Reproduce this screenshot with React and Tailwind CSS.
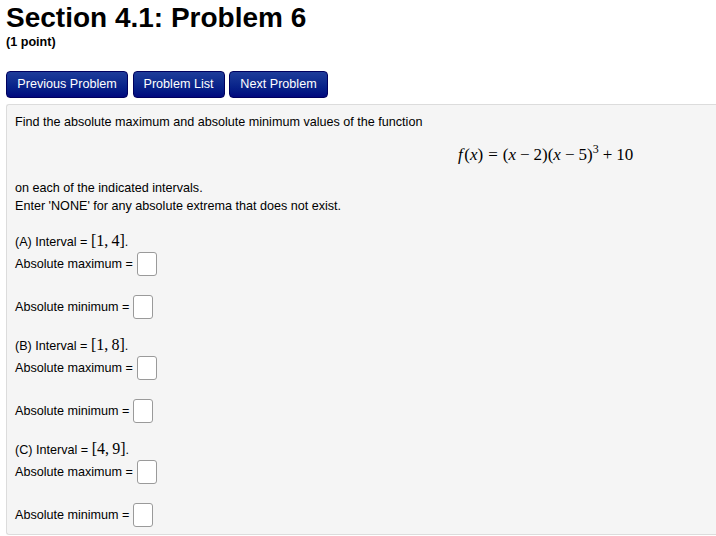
import React from 'react'

const sans = { fontFamily: '"Liberation Sans", Arial, sans-serif' }

const Box = () => (
  <span className="inline-block w-[20px] h-[24px] ml-[4px] bg-white border border-[#9a9a9a] rounded-[3px]" />
)

const Answer = ({ label }) => (
  <div className="flex items-center h-[24px] pt-[1px]">
    <span>{label} =</span>
    <Box />
  </div>
)

const Interval = ({ tag, a, b }) => (
  <div className="flex flex-col">
    <div className="h-[18px] flex items-baseline -mt-[1px] mb-[1px]">
      <span>({tag}) Interval =&nbsp;</span>
      <span className="text-[16px] leading-[18px]" style={{ fontFamily: '"Liberation Serif", serif' }}>
        [{a},&thinsp;{b}]
      </span>
      <span>.</span>
    </div>
    <Answer label="Absolute maximum" />
    <div className="h-[19px]" />
    <Answer label="Absolute minimum" />
  </div>
)

const Formula = () => (
  <div
    className="h-[48px] flex items-center pl-[443px] text-[17px] text-black"
    style={{ fontFamily: '"Liberation Serif", serif' }}
  >
    <span className="italic mr-[1.5px]">f</span>
    <span>(</span>
    <span className="italic">x</span>
    <span>)</span>
    <span className="mx-[5px]">=</span>
    <span>(</span>
    <span className="italic">x</span>
    <span className="mx-[4px]">−</span>
    <span>2)(</span>
    <span className="italic">x</span>
    <span className="mx-[4px]">−</span>
    <span>5)</span>
    <sup className="text-[12px]">3</sup>
    <span className="mx-[4px]">+</span>
    <span>10</span>
  </div>
)

const navButtons = [
  { label: 'Previous Problem', w: 'w-[122px]' },
  { label: 'Problem List', w: 'w-[92px]' },
  { label: 'Next Problem', w: 'w-[99px]' },
]

export default function App() {
  return (
    <div className="min-h-screen bg-white text-black pl-[6px] pt-[2px] overflow-hidden" style={sans}>
      <h1 className="text-[28px] font-bold leading-[32px]">Section 4.1: Problem 6</h1>
      <div className="text-[12.6px] font-bold leading-[16px]">(1 point)</div>

      {/* nav buttons */}
      <div className="flex gap-[4.5px] mt-[21px]">
        {navButtons.map((b) => (
          <button
            key={b.label}
            className={`${b.w} h-[27px] text-[12.6px] text-white rounded-[4px] border border-[#00005e] bg-gradient-to-b from-[#1e3c9a] to-[#02087e]`}
          >
            {b.label}
          </button>
        ))}
      </div>

      {/* problem body */}
      <div className="mt-[6px] bg-[#f5f5f5] border-l border-t border-b border-[#dcdcdc] rounded-l-[3px] pl-[8px] pr-[8px] pt-[8px] pb-[8px] text-[12.6px] leading-[18px]">
        <div>Find the absolute maximum and absolute minimum values of the function</div>
        <Formula />
        <div>on each of the indicated intervals.</div>
        <div>Enter 'NONE' for any absolute extrema that does not exist.</div>
        <div className="h-[18px]" />
        <div className="flex flex-col gap-[19px]">
          <Interval tag="A" a="1" b="4" />
          <Interval tag="B" a="1" b="8" />
          <Interval tag="C" a="4" b="9" />
        </div>
      </div>
    </div>
  )
}
